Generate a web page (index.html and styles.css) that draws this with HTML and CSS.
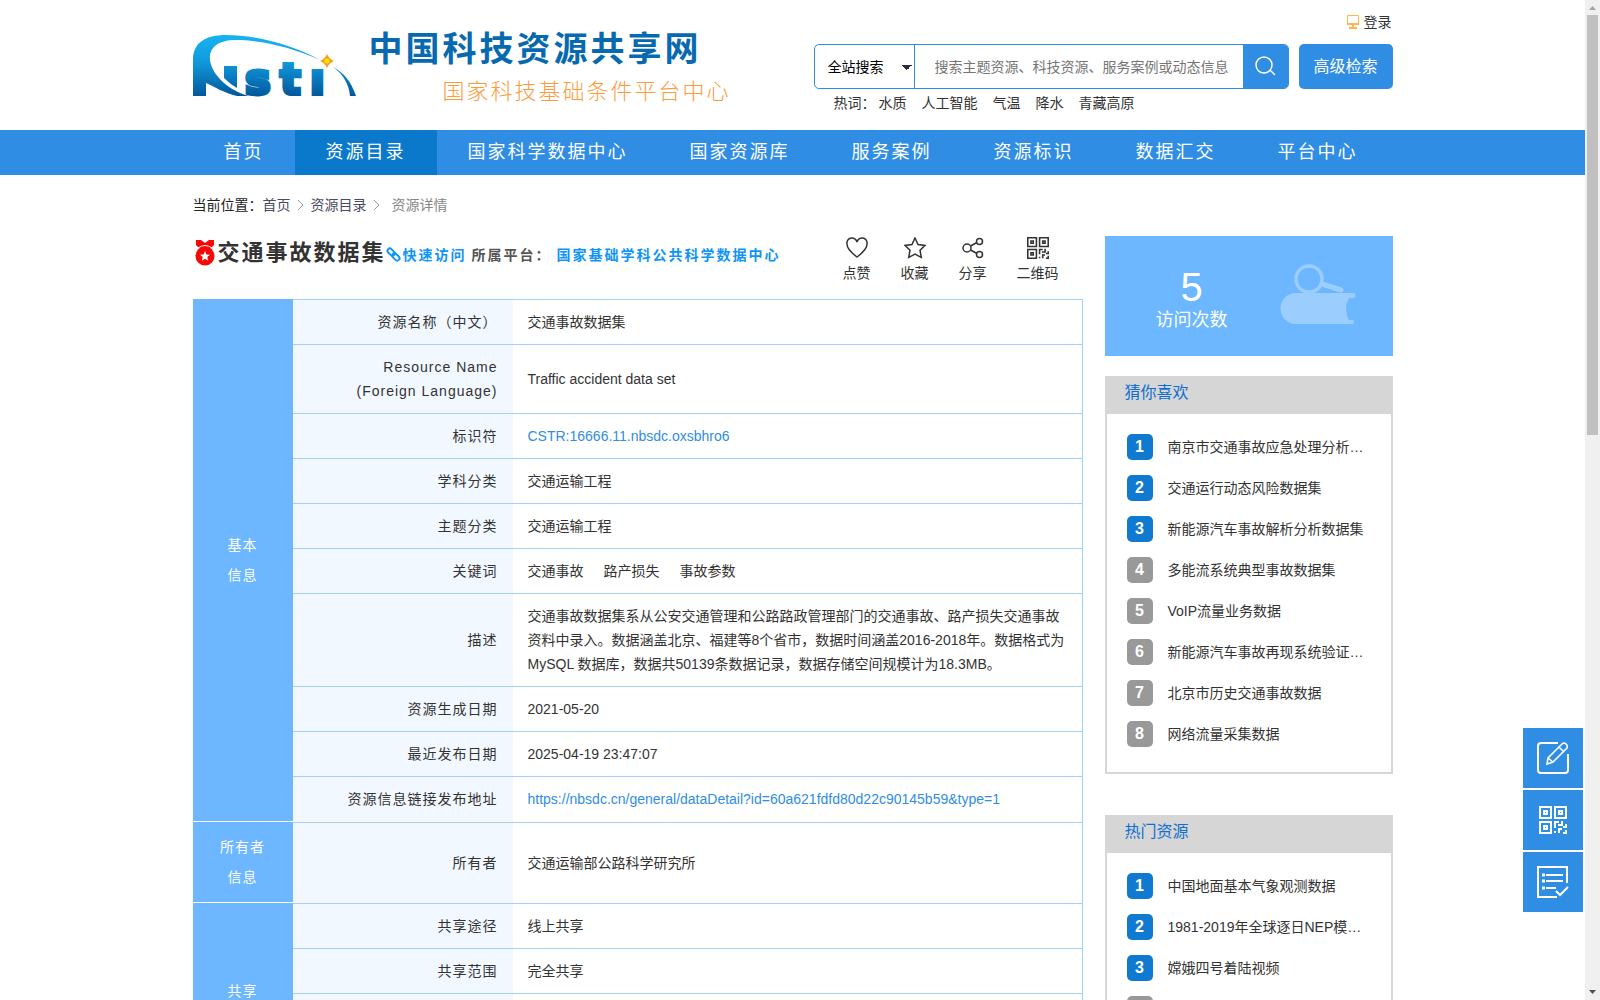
FILE: index.html
```html
<!DOCTYPE html>
<html lang="zh-CN">
<head>
<meta charset="utf-8">
<title>中国科技资源共享网</title>
<link rel="stylesheet" href="styles.css">
</head>
<body>
<svg class="defs" aria-hidden="true">
  <symbol id="qr" viewBox="0 0 28 28">
    <path fill="none" stroke="currentColor" stroke-width="2" d="M1 1h11v11H1zM16 1h11v11H16zM1 16h11v11H1zM5 5h3v3H5zM20 5h3v3h-3zM5 20h3v3H5zM16 22v-6h4M16 27v-2M19 19h4v-3h1M20 27v-4h3M27 18v3h-3M24 27h3v-3"/>
  </symbol>
</svg>
<div class="shell">
<div class="page">
  <header class="header wrap">
    <a class="brand" href="#">
      <svg class="logo" viewBox="0 0 164 62" role="img" aria-label="Nsti">
        <defs><linearGradient id="lg" gradientUnits="userSpaceOnUse" x1="0" y1="0" x2="0" y2="61"><stop offset="0" stop-color="#17b4f2"/><stop offset=".45" stop-color="#1098da"/><stop offset="1" stop-color="#01589c"/></linearGradient></defs>
        <path fill="url(#lg)" d="M0 61V25C0 8 12 0 33 0c28 0 65 9 94 25C99 12 67 5 43 5 23 5 16 14 17 25c2 16 20 31 39 36H44C31 58 22 52 13 48v13z"/>
        <path fill="url(#lg)" d="M31 31h13v22c-5-3-9-6-13-10z"/>
        <path fill="url(#lg)" d="M140 32c11 6 18 14 23 29h-6c-1-12-7-22-17-29z"/>
        <text class="logo-text" fill="url(#lg)" stroke="url(#lg)" stroke-width="4" y="59" x="52 87 117">stı</text>
        <path fill="#f9a01b" d="M134 19q2 5 7 7-5 2-7 7-2-5-7-7 5-2 7-7z"/><circle cx="134" cy="26" r="2.500" fill="#ffe200"/>
      </svg>
      <span class="brand-names"><span class="brand-title">中国科技资源共享网</span><span class="brand-sub">国家科技基础条件平台中心</span></span>
    </a>
    <div class="tools">
      <a class="login" href="#"><svg width="14" height="16" viewBox="0 0 14 16"><path fill="none" stroke="#fdb64c" d="M1.500 1.500h11v9h-11z"/><path fill="#fdb64c" d="M1 9h12v2H1zM6 11h2v3H6zM3 13h8v2H3z"/></svg>登录</a>
      <form class="search">
        <div class="search-box">
          <select class="scope" aria-label="搜索范围"><option>全站搜索</option></select>
          <input class="query" type="text" aria-label="搜索" placeholder="搜索主题资源、科技资源、服务案例或动态信息">
          <button class="go" type="button" aria-label="搜索"><svg width="22" height="22" viewBox="0 0 22 22" fill="none" stroke="#fff" stroke-width="1.500"><circle cx="10" cy="9" r="8"/><path d="M16 14l5 5"/></svg></button>
        </div>
        <button class="advanced" type="button">高级检索</button>
      </form>
      <div class="hot"><span>热词：</span><a href="#">水质</a><a href="#">人工智能</a><a href="#">气温</a><a href="#">降水</a><a href="#">青藏高原</a></div>
    </div>
  </header>
  <nav class="nav"><div class="wrap nav-row">
    <a href="#">首页</a><a class="on" href="#">资源目录</a><a href="#">国家科学数据中心</a><a href="#">国家资源库</a><a href="#">服务案例</a><a href="#">资源标识</a><a href="#">数据汇交</a><a href="#">平台中心</a>
  </div></nav>
  <div class="wrap">
    <div class="crumbs"><span>当前位置：</span><a href="#">首页</a><svg viewBox="0 0 8 12"><path d="M1 1l5 5-5 5"/></svg><a href="#">资源目录</a><svg viewBox="0 0 8 12"><path d="M1 1l5 5-5 5"/></svg><span class="here">资源详情</span></div>
    <div class="columns">
      <main class="main">
        <div class="heading">
          <svg class="medal" viewBox="0 0 20 26"><path fill="#f90606" d="M1 0h5l4 3 4-3h5v5l-4 4H5L1 5z"/><circle cx="10" cy="16" r="9.500" fill="#f90606"/><path d="M3 8q7-5 14 0" fill="none" stroke="#fff"/><path fill="#fff" d="M10 11l1.500 3.500 3.500.3-2.700 2.300.9 3.600L10 18.800l-3.200 1.900.9-3.600L5 14.800l3.500-.3z"/></svg>
          <h1>交通事故数据集</h1>
          <a class="quick" href="#"><svg viewBox="0 0 16 16" fill="none" stroke="currentColor" stroke-width="2"><rect x="1" y="3" width="9" height="5" rx="2.500" transform="rotate(45 5.500 5.500)"/><rect x="6" y="8" width="9" height="5" rx="2.500" transform="rotate(45 10.500 10.500)"/></svg>快速访问</a>
          <span class="platform">所属平台：</span><a class="source" href="#">国家基础学科公共科学数据中心</a>
          <div class="actions">
            <button type="button"><svg viewBox="0 0 22 22"><path d="M11 20C7 17 1 12 1 7a5 5 0 0 1 10-2 5 5 0 0 1 10 2c0 5-6 10-10 13z"/></svg>点赞</button>
            <button type="button"><svg viewBox="0 0 22 22"><path d="M11 1l3 6.500 7 .9-5 4.800 1.300 7.300L11 17.200l-6.300 3.300L6 13.200 1 8.400l7-.9z"/></svg>收藏</button>
            <button type="button"><svg viewBox="0 0 22 22"><circle cx="5" cy="11" r="4"/><circle cx="17.500" cy="4.500" r="3"/><circle cx="17.500" cy="17.500" r="3"/><path d="M8.500 9l6.500-3.500M8.500 13l6.500 3.500"/></svg>分享</button>
            <button type="button"><svg class="qr"><use href="#qr"/></svg>二维码</button>
          </div>
        </div>
        <table class="info">
          <colgroup><col class="c-group"><col class="c-label"><col></colgroup>
          <tbody>
            <tr><th class="group" rowspan="10">基本<br>信息</th><th>资源名称（中文）</th><td>交通事故数据集</td></tr>
            <tr><th>Resource Name<br>(Foreign Language)</th><td>Traffic accident data set</td></tr>
            <tr><th>标识符</th><td><a href="#">CSTR:16666.11.nbsdc.oxsbhro6</a></td></tr>
            <tr><th>学科分类</th><td>交通运输工程</td></tr>
            <tr><th>主题分类</th><td>交通运输工程</td></tr>
            <tr><th>关键词</th><td><span class="kw">交通事故</span><span class="kw">路产损失</span><span class="kw">事故参数</span></td></tr>
            <tr><th>描述</th><td>交通事故数据集系从公安交通管理和公路路政管理部门的交通事故、路产损失交通事故资料中录入。数据涵盖北京、福建等8个省市，数据时间涵盖2016-2018年。数据格式为MySQL 数据库，数据共50139条数据记录，数据存储空间规模计为18.3MB。</td></tr>
            <tr><th>资源生成日期</th><td>2021-05-20</td></tr>
            <tr><th>最近发布日期</th><td>2025-04-19 23:47:07</td></tr>
            <tr class="last"><th>资源信息链接发布地址</th><td><a href="#">https://nbsdc.cn/general/dataDetail?id=60a621fdfd80d22c90145b59&amp;type=1</a></td></tr>
          </tbody>
          <tbody>
            <tr><th class="group">所有者<br>信息</th><th>所有者</th><td>交通运输部公路科学研究所</td></tr>
          </tbody>
          <tbody>
            <tr><th class="group" rowspan="4">共享<br>信息</th><th>共享途径</th><td>线上共享</td></tr>
            <tr><th>共享范围</th><td>完全共享</td></tr>
            <tr class="tall"><th></th><td></td></tr>
            <tr class="tall"><th></th><td></td></tr>
          </tbody>
        </table>
      </main>
      <aside class="side">
        <div class="visits">
          <div class="count"><strong>5</strong><span>访问次数</span></div>
          <svg class="book" viewBox="0 0 76 60" fill="#9bcdff"><path d="M14 29h59a2.500 2.500 0 0 1 0 5h-4q-6 11 0 22h4a2.500 2.500 0 0 1 0 4H14C-4 57-4 32 14 29z"/><circle cx="29" cy="15" r="13" fill="none" stroke="#9bcdff" stroke-width="3.500"/><path d="M42 20l19 6" stroke="#9bcdff" stroke-width="5" stroke-linecap="round"/></svg>
        </div>
        <section class="rank">
          <h2>猜你喜欢</h2>
          <ol>
            <li><b>1</b><a href="#">南京市交通事故应急处理分析…</a></li>
            <li><b>2</b><a href="#">交通运行动态风险数据集</a></li>
            <li><b>3</b><a href="#">新能源汽车事故解析分析数据集</a></li>
            <li><b>4</b><a href="#">多能流系统典型事故数据集</a></li>
            <li><b>5</b><a href="#">VoIP流量业务数据</a></li>
            <li><b>6</b><a href="#">新能源汽车事故再现系统验证…</a></li>
            <li><b>7</b><a href="#">北京市历史交通事故数据</a></li>
            <li><b>8</b><a href="#">网络流量采集数据</a></li>
          </ol>
        </section>
        <section class="rank">
          <h2>热门资源</h2>
          <ol>
            <li><b>1</b><a href="#">中国地面基本气象观测数据</a></li>
            <li><b>2</b><a href="#">1981-2019年全球逐日NEP模…</a></li>
            <li><b>3</b><a href="#">嫦娥四号着陆视频</a></li>
            <li><b></b></li>
          </ol>
        </section>
      </aside>
    </div>
  </div>
</div>
<div class="scrollbar" aria-hidden="true"><svg viewBox="0 0 15 15"><path fill="#a3a3a3" d="M4 10l3.500-4 3.500 4z"/></svg><i></i><svg viewBox="0 0 15 15"><path fill="#505050" d="M4 5l3.500 4L11 5z"/></svg></div>
</div>
<div class="float">
  <button type="button" aria-label="反馈"><svg width="32" height="32" viewBox="0 0 32 32" fill="none" stroke="#fff" stroke-width="2"><path d="M21 1H4a3 3 0 0 0-3 3v24a3 3 0 0 0 3 3h24a3 3 0 0 0 3-3V12"/><path stroke-width="1.600" d="M10 22l1-6L25 2q2-2 4 0t1 4L16 20zM22 5l5 5M11 16l5 4"/></svg></button>
  <button type="button" aria-label="二维码"><svg width="28" height="28"><use href="#qr"/></svg></button>
  <button type="button" aria-label="清单"><svg width="32" height="32" viewBox="0 0 32 32" fill="none" stroke="#fff" stroke-width="2"><path d="M20 31H1V1h29v16M9 9h17M9 15h17M9 22h10M19 25l4 4 8-8"/><path stroke-width="3" d="M5 9h3M5 15h3M5 22h3"/></svg></button>
</div>
</body>
</html>
```
FILE: styles.css
```css
* { box-sizing: border-box; }
body {
  margin: 0;
  font: 14px/24px "Liberation Sans", "Noto Sans CJK SC", sans-serif;
  color: #333;
  background: #fff;
}
a { color: inherit; text-decoration: none; }
button, input, select { font: inherit; border: 0; margin: 0; padding: 0; background: none; }
svg { display: block; }
h1, h2, ol { margin: 0; padding: 0; list-style: none; }
.defs { position: absolute; width: 0; height: 0; }

.shell { display: grid; grid-template-columns: 1fr 15px; height: 100vh; }
.page { overflow-y: auto; scrollbar-width: none; }
.wrap { max-width: 1200px; margin: 0 auto; }

.scrollbar { background: #f0f0f0; display: flex; flex-direction: column; }
.scrollbar svg { width: 15px; height: 15px; }
.scrollbar i { width: 11px; height: 42%; margin: 0 2px auto; background: #c0c0c0; }

/* header */
.header { display: flex; justify-content: space-between; min-height: 130px; }
.brand { display: flex; gap: 12px; }
.logo { width: 164px; height: 62px; margin-top: 35px; }
.logo-text { font: bold 43px "DejaVu Sans", sans-serif; }
.brand-names { display: flex; flex-direction: column; padding-top: 27px; }
.brand-title { font-size: 34px; line-height: 44px; font-weight: 700; letter-spacing: 3px; color: #0769b0; }
.brand-sub { font-size: 22px; line-height: 42px; font-weight: 300; letter-spacing: 2px; color: #ff9a3c; padding-left: 74px; }
.tools { width: 579px; display: flex; flex-direction: column; }
.login { display: flex; align-items: center; justify-content: flex-end; gap: 4px; height: 44px; padding-right: 1px; }
.search { display: flex; gap: 10px; height: 45px; }
.search-box { flex: 1; display: flex; border: 1px solid #2f8de4; border-radius: 5px; overflow: hidden; }
.scope {
  appearance: none;
  width: 100px;
  padding-left: 13px;
  color: #000;
  border-right: 1px solid #2f8de4;
  background-image: linear-gradient(to bottom left, #2b2b45 50%, transparent 50%),
    linear-gradient(to bottom right, #2b2b45 50%, transparent 50%);
  background-size: 5px 5px;
  background-repeat: no-repeat;
  background-position: 87px 20px, 92px 20px;
}
.query { flex: 1; min-width: 0; padding-left: 20px; }
.query::placeholder { color: #757575; }
.go { width: 45px; background: #2f8de4; display: grid; place-items: center; }
.advanced { width: 94px; border-radius: 5px; background: #2f8de4; color: #fff; font-size: 16px; }
.hot { display: flex; gap: 15px; line-height: 28px; padding-left: 20px; }
.hot span { margin-right: -12px; }

/* navigation */
.nav { background: #2f8de4; }
.nav-row { display: flex; }
.nav a { padding: 0 31px; height: 45px; line-height: 44px; font-size: 18px; letter-spacing: 2px; color: #fff; white-space: nowrap; }
.nav a.on { background: #0a79cb; }

/* breadcrumb and heading */
.crumbs { display: flex; align-items: center; height: 59px; color: #222; }
.crumbs a { color: #4a4a60; }
.crumbs svg { width: 8px; height: 12px; margin: 0 6px; fill: none; stroke: #999; }
.crumbs .here { color: #888; padding-left: 5px; }
.columns { display: flex; justify-content: space-between; gap: 22px; }
.main { flex: 1; min-width: 0; }
.side { width: 288px; padding-top: 2px; }
.heading { display: flex; align-items: center; height: 65px; padding: 0 24px 28px 2px; white-space: nowrap; }
.medal { width: 20px; height: 26px; }
h1 { font-size: 22px; letter-spacing: 2px; line-height: 32px; padding-left: 3px; }
.quick, .platform, .source { font-weight: 700; letter-spacing: 2px; padding-top: 4px; }
.quick { display: flex; align-items: center; gap: 2px; }
.quick svg { width: 15px; height: 15px; }
.quick, .source { color: #0d94f9; }
.platform { color: #555; padding-left: 5px; padding-right: 5px; }
.actions { display: flex; gap: 30px; margin-left: auto; padding-top: 16px; }
.actions button { display: flex; flex-direction: column; align-items: center; gap: 2px; color: #333; }
.actions svg { width: 22px; height: 22px; fill: none; stroke: #333; stroke-width: 1.500; }

/* details table */
.info { width: 100%; table-layout: fixed; border-collapse: separate; border-spacing: 0; border-right: 1px solid #a3d1ff; }
.c-group { width: 100px; }
.c-label { width: 220px; }
.info th, .info td { padding: 10px 14px 10px 15px; border-top: 1px solid #a3d1ff; font-weight: 400; text-align: left; }
.info th { background: #f1f8ff; text-align: right; padding-right: 15px; letter-spacing: 1px; }
.info th.group { background: #6cb7ff; color: #fff; text-align: center; line-height: 30px; padding: 10px; border-top: 0; border-bottom: 1px solid #fff; }
.info .last th, .info .last td { padding-bottom: 11px; }
.info .tall > * { height: 58px; }
.info td a { color: #2f8de4; }
.kw { margin-right: 20px; }

/* sidebar */
.visits { display: flex; align-items: center; justify-content: space-between; height: 120px; padding: 0 37px 0 51px; background: #6cb7ff; color: #fff; }
.count { display: flex; flex-direction: column; align-items: center; padding-top: 10px; }
.count strong { font-size: 40px; line-height: 38px; font-weight: 400; }
.count span { font-size: 18px; line-height: 28px; }
.book { width: 76px; height: 60px; margin-bottom: 5px; }
.rank { margin: 20px 0 41px; border: 2px solid #d6d6d6; }
.rank h2 { background: #d6d6d6; color: #0f6fd0; font-size: 16px; font-weight: 400; line-height: 30px; padding: 0 18px 6px; }
.rank ol { display: grid; gap: 15px; padding: 20px 20px 25px; }
.rank li { display: flex; align-items: center; gap: 15px; white-space: nowrap; }
.rank b { width: 26px; height: 26px; line-height: 26px; border-radius: 5px; background: #999; color: #fff; font-size: 16px; text-align: center; }
.rank li:nth-child(-n+3) b { background: #107ad0; }

/* shortcut buttons over the page */
.float { position: fixed; right: 17px; bottom: 88px; display: grid; gap: 2px; }
.float button { width: 60px; height: 60px; background: #2f8de4; color: #fff; display: grid; place-items: center; }
```
